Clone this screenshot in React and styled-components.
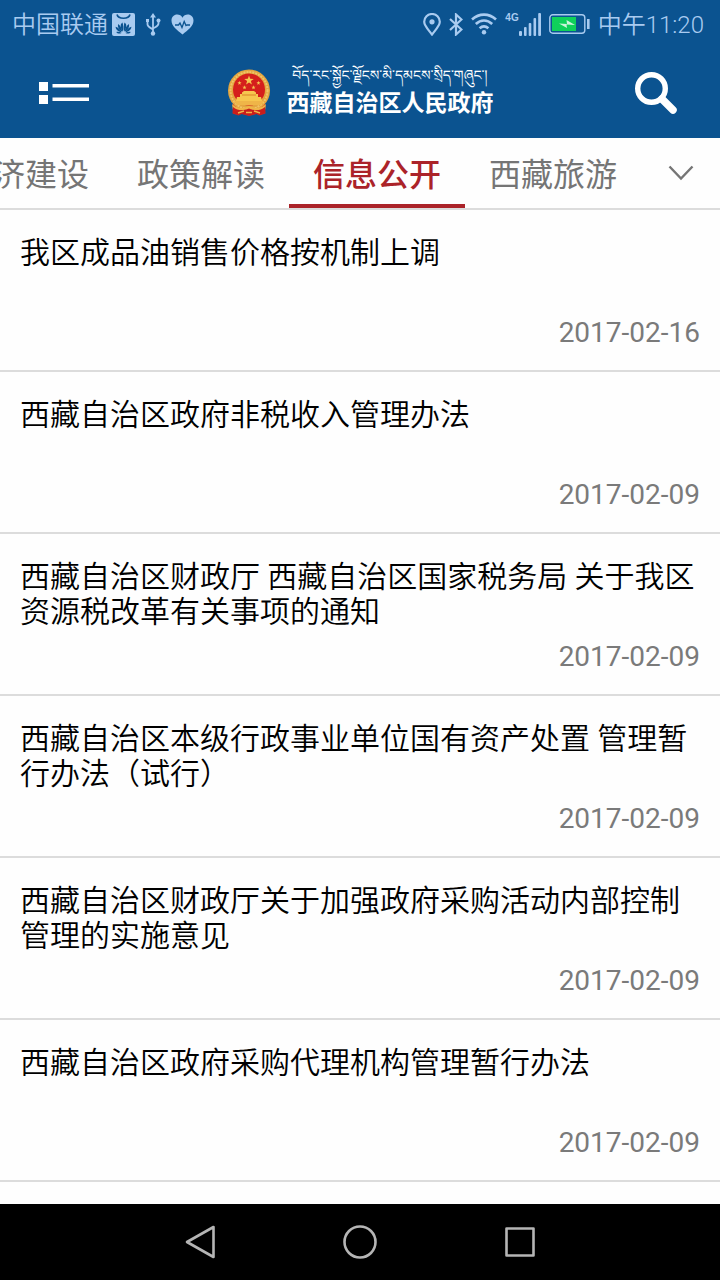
import React, { useState } from 'react';
import styled, { createGlobalStyle } from 'styled-components';

const GlobalStyle = createGlobalStyle`
  * {
    box-sizing: border-box;
  }
  body {
    margin: 0;
    background: #fefefe;
    font-family: Roboto, "Noto Sans CJK SC", sans-serif;
  }
  button {
    border: none;
    padding: 0;
    background: none;
    font: inherit;
    color: inherit;
    cursor: pointer;
  }
  svg {
    display: block;
    flex: none;
  }
`;

const Page = styled.div`
  min-height: 100vh;
  display: flex;
  flex-direction: column;
`;

const TopArea = styled.header`
  background: #0b5390;
`;

const StatusBar = styled.div`
  height: 48px;
  padding: 0 16px 0 12px;
  display: flex;
  align-items: center;
  justify-content: space-between;
  color: #a9cbf0;
  font-size: 24px;
  font-weight: 350;
  line-height: 32px;
`;

const StatusGroup = styled.div`
  display: flex;
  align-items: center;
  gap: ${props => props.$gap};
`;

const StatusText = styled.span`
  padding-top: 2px;
`;

const Signal = styled.div`
  display: flex;
  align-items: flex-start;
`;

const Network = styled.span`
  font-family: "Liberation Sans", sans-serif;
  font-size: 10px;
  font-weight: bold;
  line-height: 10px;
`;

const TitleBar = styled.div`
  height: 90px;
  padding: 0 36px;
  display: flex;
  align-items: center;
  justify-content: space-between;
  color: #ffffff;
`;

const BarButton = styled.button`
  width: 56px;
  height: 56px;
  display: flex;
  align-items: center;
  justify-content: center;
`;

const Brand = styled.a`
  display: flex;
  align-items: center;
  gap: 16px;
  color: inherit;
  text-decoration: none;
`;

const BrandText = styled.div`
  display: flex;
  flex-direction: column;
  align-items: center;
  white-space: nowrap;
`;

const Tibetan = styled.span`
  font-family: "Noto Serif Tibetan", "Noto Sans Tibetan", "Jomolhari", serif;
  font-size: 14px;
  line-height: 22px;
`;

const BrandName = styled.span`
  font-size: 23px;
  font-weight: bold;
  line-height: 28px;
`;

const TabBar = styled.nav`
  height: 72px;
  display: flex;
  border-bottom: 2px solid #dcdcdc;
`;

/* tabs are anchored to the right, the older ones run off the left edge */
const TabStrip = styled.div`
  flex: 1;
  display: flex;
  justify-content: flex-end;
  overflow: hidden;
`;

const Tab = styled.button`
  flex: none;
  padding: 8px 24px 0;
  border-bottom: 4px solid ${props => props.$active ? "#ab2329" : "transparent"};
  color: ${props => props.$active ? "#ab2329" : "#757575"};
  font-size: 32px;
  font-weight: ${props => props.$active ? 500 : 400};
  line-height: 48px;
`;

const MoreButton = styled.button`
  width: 79px;
  display: flex;
  align-items: center;
  justify-content: center;
`;

const List = styled.ul`
  flex: 1;
  margin: 0;
  padding: 0;
  list-style: none;
`;

const Item = styled.li`
  border-bottom: 2px solid #dcdcdc;
`;

const ItemLink = styled.a`
  padding: 25px 20px 21px;
  display: flex;
  flex-direction: column;
  gap: 12px;
  text-decoration: none;
`;

const ItemTitle = styled.span`
  min-height: 70px;
  color: #000000;
  font-size: 30px;
  font-weight: 350;
  line-height: 35px;
`;

const ItemDate = styled.time`
  align-self: flex-end;
  color: #7a7a7a;
  font-size: 28px;
  line-height: 32px;
`;

const NavBar = styled.footer`
  height: 76px;
  display: flex;
  justify-content: center;
  background: #000000;
`;

const NavButton = styled.button`
  width: 160px;
  display: flex;
  align-items: center;
  justify-content: center;
`;

const tabs = ["经济建设", "政策解读", "信息公开", "西藏旅游"];

const articles = [
  { title: "我区成品油销售价格按机制上调", date: "2017-02-16" },
  { title: "西藏自治区政府非税收入管理办法", date: "2017-02-09" },
  { title: "西藏自治区财政厅 西藏自治区国家税务局 关于我区资源税改革有关事项的通知", date: "2017-02-09" },
  { title: "西藏自治区本级行政事业单位国有资产处置 管理暂行办法（试行）", date: "2017-02-09" },
  { title: "西藏自治区财政厅关于加强政府采购活动内部控制管理的实施意见", date: "2017-02-09" },
  { title: "西藏自治区政府采购代理机构管理暂行办法", date: "2017-02-09" },
];

// Status icons
const HuaweiIcon = () => (
  <svg width="23" height="23" viewBox="0 0 23 23">
    <rect width="23" height="23" rx="2" fill="#a9cbf0" />
    <path d="M5 1.500c1.200 5 11.800 5 13 0" fill="none" stroke="#0b5390" strokeWidth="1.600" />
    <g fill="#0b5390">
      <path d="M11 18.500C8 15 8 11 10.500 9.500c.8 2.500 1 5.500.5 9zM12 18.500c3-3.500 3-7.500.5-9-.8 2.500-1 5.500-.5 9z" />
      <path d="M10.300 18.800C6.500 16.500 5.200 13.500 6.200 11c2.300 1.700 3.600 4.300 4.100 7.800zM12.700 18.800c3.800-2.300 5.100-5.300 4.100-7.800-2.300 1.700-3.600 4.300-4.100 7.800z" />
      <path d="M9.700 19.200C6 18.800 3.700 16.500 3.600 13.800c2.600.8 4.800 2.700 6.100 5.400zM13.300 19.200c3.700-.4 6-2.700 6.100-5.400-2.600.8-4.800 2.700-6.100 5.400z" />
      <path d="M9.500 19.900c-2.500 1.300-4.200.6-5.200-1 2-.3 3.700.1 5.200 1zM13.500 19.900c2.500 1.300 4.200.6 5.200-1-2-.3-3.700.1-5.200 1z" />
    </g>
  </svg>
);

const UsbIcon = () => (
  <svg width="16" height="23" viewBox="0 0 16 23" fill="none" stroke="#a9cbf0" strokeWidth="1.800">
    <path d="M8 3v17M2.500 8v3.500c0 2 1.500 2.500 5.500 5M13.500 8v2.500c0 2.500-2 3-5.500 5" />
    <path d="M8 0l3 4.500H5zM1 6h3v3H1z" fill="#a9cbf0" stroke="none" />
    <circle cx="13.500" cy="7.500" r="2" fill="#a9cbf0" stroke="none" />
    <circle cx="8" cy="20.500" r="2.200" fill="#a9cbf0" stroke="none" />
  </svg>
);

const HeartIcon = () => (
  <svg width="23" height="21" viewBox="0 0 23 21">
    <path d="M11.500 20.500C6 16 .5 12 .5 6.500.5 3 3 .5 6.200.5c2.300 0 4.200 1.200 5.300 3.200C12.600 1.700 14.500.5 16.800.5c3.200 0 5.700 2.500 5.700 6 0 5.500-5.500 9.500-11 14z" fill="#a9cbf0" />
    <path d="M4 11h3.500l1.500-2 2 4.500 2.200-6 1.800 4 1-.5h3" fill="none" stroke="#0b5390" strokeWidth="1.300" />
  </svg>
);

const PinIcon = () => (
  <svg width="18" height="23" viewBox="0 0 18 23">
    <path d="M9 21.500C6 17.500 1.200 13 1.200 8.800a7.800 7.800 0 0 1 15.600 0C16.800 13 12 17.500 9 21.500z" fill="none" stroke="#a9cbf0" strokeWidth="2.200" />
    <circle cx="9" cy="8.800" r="2.600" fill="#a9cbf0" />
  </svg>
);

const BluetoothIcon = () => (
  <svg width="14" height="23" viewBox="0 0 14 23">
    <path d="M1 6l11.500 10.500L7 21.500v-20l5.500 5L1 17" fill="none" stroke="#a9cbf0" strokeWidth="2.200" />
  </svg>
);

const WifiIcon = () => (
  <svg width="26" height="22" viewBox="0 0 26 22" fill="none" stroke="#a9cbf0" strokeWidth="2.600">
    <path d="M1 6.500c7-6.500 17-6.500 24 0M4.800 11c5-4.700 11.400-4.700 16.400 0M8.600 15.300c2.800-2.500 6-2.500 8.800 0" />
    <circle cx="13" cy="19.300" r="2.200" fill="#a9cbf0" stroke="none" />
  </svg>
);

const SignalIcon = () => (
  <svg width="22" height="23" viewBox="0 0 22 23" fill="#a9cbf0">
    <rect x="0" y="18" width="3" height="5" rx="1" />
    <rect x="5" y="14" width="2.600" height="9" rx="1" />
    <rect x="9.700" y="10" width="2.600" height="13" rx="1" />
    <rect x="14.500" y="5" width="2.600" height="18" rx="1" />
    <rect x="19.200" y="0" width="2.800" height="23" rx="1" />
  </svg>
);

const BatteryIcon = () => (
  <svg width="41" height="20" viewBox="0 0 41 20">
    <rect x=".8" y=".8" width="35" height="18.400" rx="3" fill="none" stroke="#a9cbf0" strokeWidth="1.400" />
    <rect x="3" y="3" width="24" height="14" fill="#0fd15a" />
    <path d="M10 9.500l8 .5-.5-4 8.500 5-8.500-.5.5 3.500z" fill="#cdf5dc" />
    <rect x="38" y="5" width="2.600" height="10" fill="#a9cbf0" />
  </svg>
);

// Header icons
const MenuIcon = () => (
  <svg width="50" height="24" viewBox="0 0 50 24" fill="#ffffff">
    <rect x="0" y="1" width="9" height="9" />
    <rect x="0" y="14" width="9" height="9" />
    <rect x="13.500" y="3" width="36.500" height="3.500" />
    <rect x="13.500" y="16.500" width="36.500" height="3.500" />
  </svg>
);

const SearchIcon = () => (
  <svg width="42" height="42" viewBox="0 0 42 42" fill="none" stroke="#ffffff">
    <circle cx="16.500" cy="16.500" r="13.800" strokeWidth="5.400" />
    <path d="M27 27l11 11" strokeWidth="7.500" strokeLinecap="round" />
    <path d="M25 25l4 4" strokeWidth="5" />
  </svg>
);

const star = "M0-1l.24.67.71.02-.57.43.2.69L0 .4l-.58.41.2-.69-.57-.43.71-.02z";

const Emblem = () => (
  <svg width="44" height="48" viewBox="0 0 44 48">
    <path d="M6 34l-.5 10.500 6 2 3-1.500 7.500 2 7.500-2 3 1.500 6-2L38 34z" fill="#d3231f" />
    <circle cx="22" cy="21.500" r="21" fill="#e3a53f" />
    <circle cx="22" cy="21.500" r="18.500" fill="none" stroke="#f0c468" strokeWidth="2" strokeDasharray="2 1" />
    <circle cx="22" cy="20.500" r="16" fill="#d51f1c" />
    <g fill="#f6c64f">
      <path d={star} transform="translate(22 11.500) scale(5)" />
      <path d={star} transform="translate(12.500 14) scale(2.200)" />
      <path d={star} transform="translate(31.500 14) scale(2.200)" />
      <path d={star} transform="translate(17.500 18.500) scale(2.200)" />
      <path d={star} transform="translate(26.500 18.500) scale(2.200)" />
      <path d="M15 23.500l2-1.500h10l2 1.500v1.500h2v3h3l1 4H9l1-4h3v-3h2z" />
      <path d="M7 32h30l-3 4H10z" fill="#efb548" />
    </g>
    <path d="M15 26h14" stroke="#d98428" strokeWidth="1" />
    <path d="M5 35c4 4 8 4.500 13 3.500l4-1.500 4 1.500c5 1 9 .5 13-3.500l-1 6c-4 2-9 1-12-1l-4 1-4-1c-3 2-8 3-12 1z" fill="#efb548" />
    <path d="M6 38c5 4 10 4 16 1.500C28 42 33 42 38 38v6l-6 2-3-1.500-7 2-7-2-3 1.500-6-2z" fill="#c91d1c" />
    <path d="M11 44l6-2M33 44l-6-2M19 43.500h6" fill="none" stroke="#efb548" strokeWidth="1.500" />
  </svg>
);

const ChevronIcon = () => (
  <svg width="26" height="16" viewBox="0 0 26 16" fill="none" stroke="#757575" strokeWidth="2.400">
    <path d="M1.500 1.500L13 13.500l11.500-12" />
  </svg>
);

const NavIcon = ({ children }) => (
  <svg width="36" height="36" viewBox="0 0 36 36" fill="none" stroke="#b5b5b5" strokeWidth="2.600" strokeLinejoin="round">
    {children}
  </svg>
);

const App = () => {
  const [active, setActive] = useState("信息公开");

  return (
    <>
      <GlobalStyle />
      <Page>
        <TopArea>
          <StatusBar>
            <StatusGroup $gap="10px">
              <StatusGroup $gap="4px">
                <StatusText>中国联通</StatusText>
                <HuaweiIcon />
              </StatusGroup>
              <UsbIcon />
              <HeartIcon />
            </StatusGroup>
            <StatusGroup $gap="8px">
              <PinIcon />
              <BluetoothIcon />
              <WifiIcon />
              <Signal>
                <Network>4G</Network>
                <SignalIcon />
              </Signal>
              <BatteryIcon />
              <StatusText>中午11:20</StatusText>
            </StatusGroup>
          </StatusBar>
          <TitleBar>
            <BarButton aria-label="菜单"><MenuIcon /></BarButton>
            <Brand href="#">
              <Emblem />
              <BrandText>
                <Tibetan lang="bo">བོད་རང་སྐྱོང་ལྗོངས་མི་དམངས་སྲིད་གཞུང་།</Tibetan>
                <BrandName>西藏自治区人民政府</BrandName>
              </BrandText>
            </Brand>
            <BarButton aria-label="搜索"><SearchIcon /></BarButton>
          </TitleBar>
        </TopArea>
        <TabBar>
          <TabStrip>
            {tabs.map(tab => (
              <Tab key={tab} $active={tab === active} onClick={() => setActive(tab)}>{tab}</Tab>
            ))}
          </TabStrip>
          <MoreButton aria-label="更多栏目"><ChevronIcon /></MoreButton>
        </TabBar>
        <List>
          {articles.map(article => (
            <Item key={article.title}>
              <ItemLink href="#">
                <ItemTitle>{article.title}</ItemTitle>
                <ItemDate dateTime={article.date}>{article.date}</ItemDate>
              </ItemLink>
            </Item>
          ))}
        </List>
        <NavBar>
          <NavButton aria-label="返回">
            <NavIcon><path d="M31.500 3v30L5 18z" /></NavIcon>
          </NavButton>
          <NavButton aria-label="主屏幕">
            <NavIcon><circle cx="18" cy="18" r="15.500" /></NavIcon>
          </NavButton>
          <NavButton aria-label="最近任务">
            <NavIcon><rect x="4.500" y="4.500" width="27" height="27" /></NavIcon>
          </NavButton>
        </NavBar>
      </Page>
    </>
  );
}

export default App
